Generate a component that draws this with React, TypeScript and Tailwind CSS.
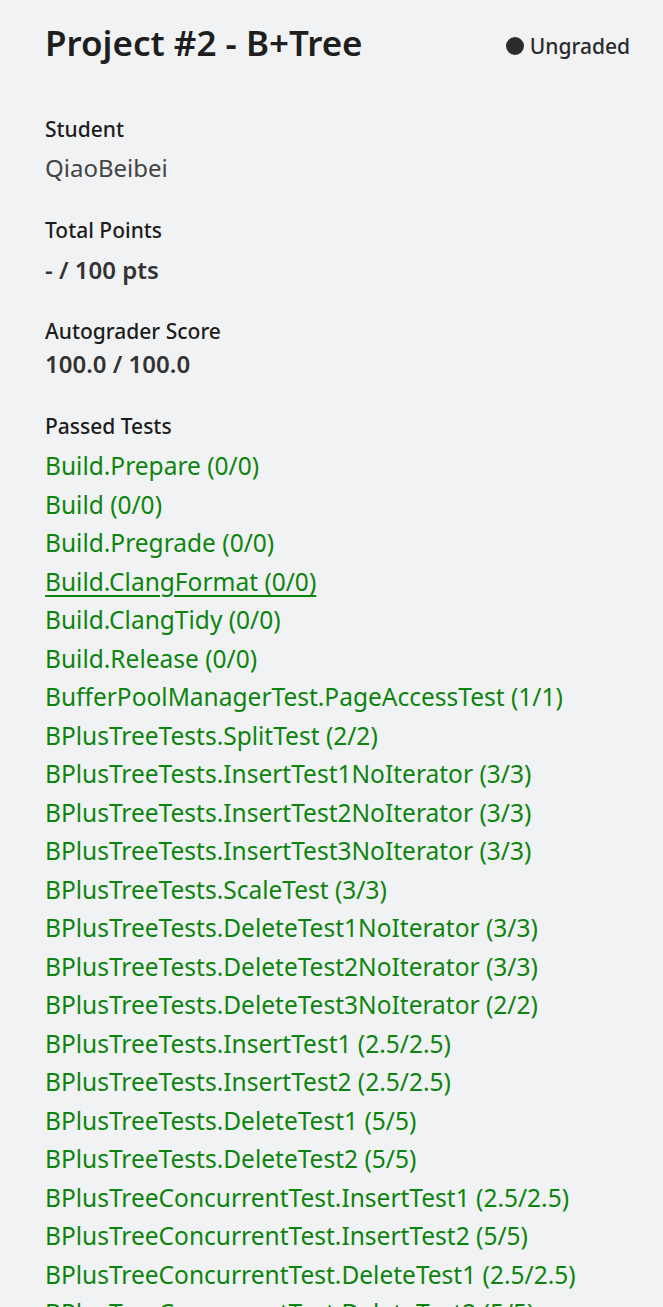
import React from 'react';

const tests = [
  'Build.Prepare (0/0)',
  'Build (0/0)',
  'Build.Pregrade (0/0)',
  'Build.ClangFormat (0/0)',
  'Build.ClangTidy (0/0)',
  'Build.Release (0/0)',
  'BufferPoolManagerTest.PageAccessTest (1/1)',
  'BPlusTreeTests.SplitTest (2/2)',
  'BPlusTreeTests.InsertTest1NoIterator (3/3)',
  'BPlusTreeTests.InsertTest2NoIterator (3/3)',
  'BPlusTreeTests.InsertTest3NoIterator (3/3)',
  'BPlusTreeTests.ScaleTest (3/3)',
  'BPlusTreeTests.DeleteTest1NoIterator (3/3)',
  'BPlusTreeTests.DeleteTest2NoIterator (3/3)',
  'BPlusTreeTests.DeleteTest3NoIterator (2/2)',
  'BPlusTreeTests.InsertTest1 (2.5/2.5)',
  'BPlusTreeTests.InsertTest2 (2.5/2.5)',
  'BPlusTreeTests.DeleteTest1 (5/5)',
  'BPlusTreeTests.DeleteTest2 (5/5)',
  'BPlusTreeConcurrentTest.InsertTest1 (2.5/2.5)',
  'BPlusTreeConcurrentTest.InsertTest2 (5/5)',
  'BPlusTreeConcurrentTest.DeleteTest1 (2.5/2.5)',
  'BPlusTreeConcurrentTest.DeleteTest2 (5/5)',
];

export default function App() {
  return (
    <div
      className="min-h-screen bg-[#f1f2f4] text-[#2b2b2b] pl-[45px] pr-[33px] pt-[19px]"
      style={{ fontFamily: '"Noto Sans", "Open Sans", sans-serif' }}
    >
      {/* Header */}
      <div className="flex items-center justify-between h-[48px]">
        <h1 className="text-[35px] font-semibold leading-[48px] text-[#1e1e1e]">Project #2 - B+Tree</h1>
        <div className="flex items-center gap-[6px] text-[21px] font-medium leading-[30px] mt-[5px] text-[#2b2b2b]">
          <span className="w-[18px] h-[18px] rounded-full bg-[#2b2b2b]" />
          Ungraded
        </div>
      </div>

      {/* Student */}
      <div className="mt-[49px]">
        <p className="text-[21px] font-medium leading-[27px] text-[#1c1c1c]">Student</p>
        <p className="mt-[8px] text-[24px] leading-[33px] text-[#444]">QiaoBeibei</p>
      </div>

      {/* Total points */}
      <div className="mt-[33px]">
        <p className="text-[21px] font-medium leading-[27px] text-[#1c1c1c]">Total Points</p>
        <p className="mt-[9px] text-[24px] font-semibold leading-[33px] text-[#333]">- / 100 pts</p>
      </div>

      {/* Autograder */}
      <div className="mt-[32px]">
        <p className="text-[21px] font-medium leading-[27px] text-[#1c1c1c]">Autograder Score</p>
        <p className="mt-[2px] text-[24px] font-semibold leading-[33px] text-[#333]">100.0 / 100.0</p>
      </div>

      {/* Passed tests */}
      <div className="mt-[33px]">
        <p className="text-[21px] font-medium leading-[27px] text-[#1c1c1c]">Passed Tests</p>
        <ul className="mt-[7px]">
          {tests.map(t => (
            <li key={t} className="text-[24.5px] leading-[38.5px] text-[#0d840d] whitespace-nowrap">
              <a
                href="#"
                className={t === 'Build.ClangFormat (0/0)' ? 'underline underline-offset-[4px]' : 'no-underline'}
              >
                {t}
              </a>
            </li>
          ))}
        </ul>
      </div>
    </div>
  );
}
